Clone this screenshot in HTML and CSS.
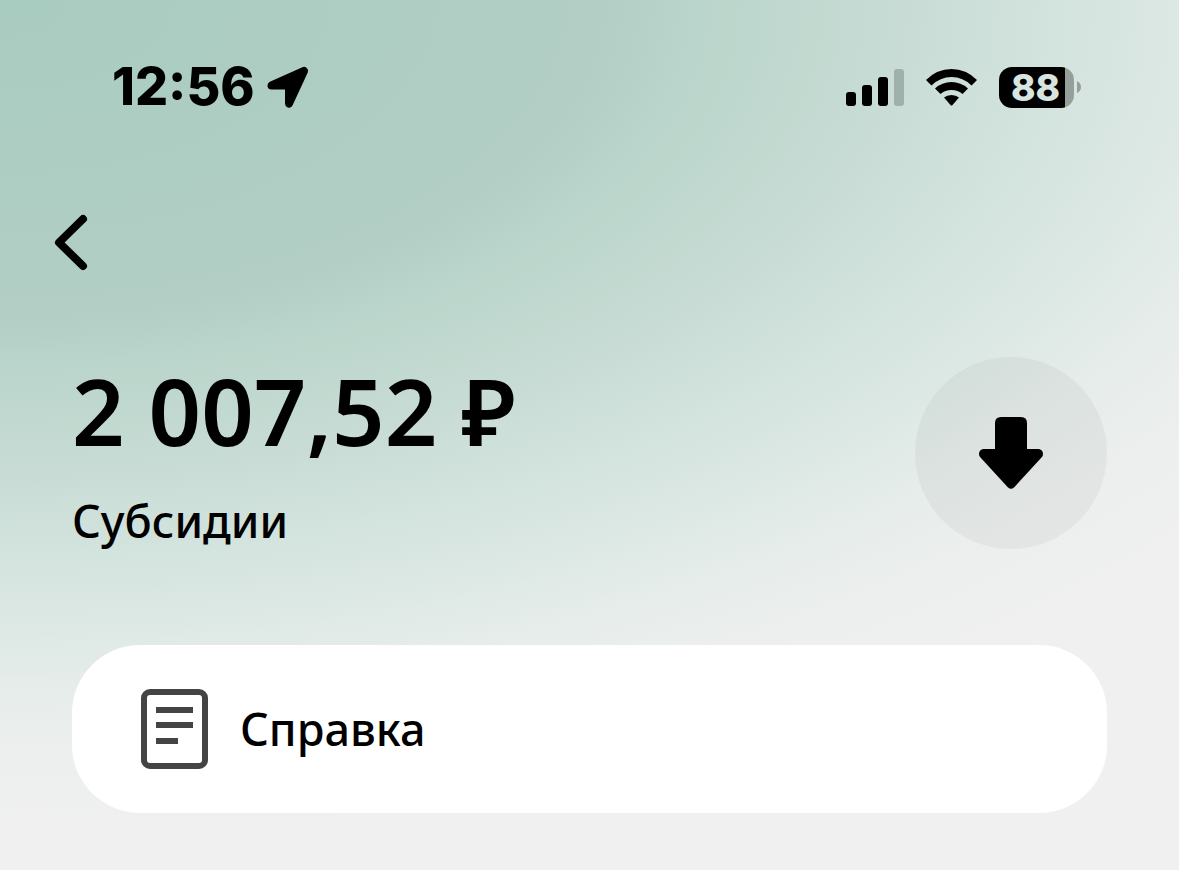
FILE: index.html
```html
<!DOCTYPE html>
<html lang="ru">
<head>
  <meta charset="UTF-8" />
  <meta name="viewport" content="width=device-width, initial-scale=1.0" />
  <title>Субсидии</title>
  <link rel="stylesheet" href="styles.css">
</head>
<body>

  <div class="status-bar">
    <div class="status-left">
      <span class="time">12:56</span>
      <svg class="location" width="42" height="42" viewBox="0 0 42 42">
        <path d="M4.500 19.500 37 5 22 37.500V19.500Z" />
      </svg>
    </div>
    <div class="status-right">
      <svg width="58" height="38" viewBox="0 0 58 38">
        <rect x="0" y="24" width="10" height="14" rx="3" />
        <rect x="16" y="17" width="10" height="21" rx="3" />
        <rect x="32" y="9" width="10" height="29" rx="3" />
        <rect class="faded" x="48" y="1" width="10" height="37" rx="3" />
      </svg>
      <svg width="51" height="38" viewBox="0 0 51 38">
        <path d="M0 12Q11 1 25.500 1T51 12L45.500 17.500Q37 9 25.500 9T5.500 17.500Z" />
        <path d="M9 20.500Q16 14 25.500 14T42 20.500L36.500 26Q32 22 25.500 22T14.500 26Z" />
        <path d="M18 29.500Q21 27 25.500 27T33 29.500L26.500 37Q25.500 38 24.500 37Z" />
      </svg>
      <div class="battery">
        <span class="battery-level">88</span>
        <svg class="battery-tip" width="4" height="12" viewBox="0 0 4 12">
          <path d="M0 0Q4 2 4 6T0 12Z" />
        </svg>
      </div>
    </div>
  </div>

  <div class="navbar">
    <button class="back" type="button" aria-label="Назад">
      <svg width="34" height="58" viewBox="0 0 34 58">
        <path d="M29 5 5 28.500 29 52" />
      </svg>
    </button>
  </div>

  <div class="container">
    <div class="account">
      <div>
        <h1 class="amount">2 007,52 ₽</h1>
        <p class="account-name">Субсидии</p>
      </div>
      <button class="download" type="button" aria-label="Пополнить">
        <svg width="64" height="72" viewBox="0 0 64 72">
          <path d="M22 0H42Q48 0 48 6V32H60Q64 33 64 37Q64 39 62.500 40.500L35 70.500Q32 73 29 70.500L1.500 40.500Q0 39 0 37Q0 33 4 32H16V6Q16 0 22 0Z" />
        </svg>
      </button>
    </div>

    <a class="card" href="#">
      <svg width="68" height="80" viewBox="0 0 68 80">
        <rect class="sheet" x="4" y="3" width="61" height="74" rx="6" />
        <path d="M16 18H53V24H16ZM16 33H53V39H16ZM16 49H38V55H16Z" />
      </svg>
      <span>Справка</span>
    </a>
  </div>

</body>
</html>
```

FILE: styles.css
```css
* {
  box-sizing: border-box;
  margin: 0;
  padding: 0;
}
body {
  min-height: 100vh;
  font-family: "Noto Sans", sans-serif;
  color: #000;
  background: #f0f0f0 radial-gradient(ellipse 118% 84% at 0 0, #a9ccc0 0%, #adcdc2 20%, #b2cec5 43%, #bad5cb 50%, #c6dbd3 63%, #d1e2dc 74%, #dce8e4 85%, #e7edeb 95%, #edefee 104%, #f0f0f0 118%) no-repeat;
}
button {
  border: none;
  background: none;
  cursor: pointer;
}
svg {
  display: block;
  flex-shrink: 0;
}
.status-bar {
  display: flex;
  justify-content: space-between;
  align-items: center;
  height: 111px;
  padding: 63px 98px 0 112px;
  font-family: Inter, sans-serif;
}
.status-left {
  display: flex;
  align-items: center;
  gap: 12px;
}
.time {
  font-size: 52px;
  line-height: 50px;
  font-weight: 800;
}
.location {
  stroke: #000;
  stroke-width: 8;
  stroke-linejoin: round;
}
.status-right {
  display: flex;
  align-items: center;
  gap: 22px;
}
.faded {
  fill-opacity: 0.2;
}
.battery {
  display: flex;
  align-items: center;
  gap: 3px;
}
.battery-level {
  width: 75px;
  height: 41px;
  padding-right: 2px;
  border-radius: 13px;
  background: linear-gradient(to right, #000 66px, rgba(0, 0, 0, 0.3) 66px);
  color: #d8e4df;
  font-size: 37px;
  line-height: 41px;
  font-weight: 800;
  text-align: center;
}
.battery-tip {
  fill-opacity: 0.3;
}
.navbar {
  padding: 103px 54px 0;
}
.back {
  display: block;
}
.back path {
  fill: none;
  stroke: #000;
  stroke-width: 8;
  stroke-linecap: round;
  stroke-linejoin: round;
}
.container {
  padding: 85px 72px 56px;
}
.account {
  display: flex;
  justify-content: space-between;
  align-items: center;
}
.amount {
  font-size: 92px;
  line-height: 108px;
  font-weight: 600;
}
.account-name {
  margin-top: 28px;
  font-size: 45px;
  line-height: 56px;
  font-weight: 500;
}
.download {
  display: flex;
  align-items: center;
  justify-content: center;
  flex-shrink: 0;
  width: 192px;
  height: 192px;
  border-radius: 50%;
  background: rgba(0, 0, 0, 0.04);
}
.card {
  display: flex;
  align-items: center;
  gap: 32px;
  min-height: 168px;
  margin-top: 96px;
  padding: 0 68px;
  border-radius: 68px;
  background: #fff;
  color: #000;
  font-size: 45px;
  line-height: 56px;
  font-weight: 500;
  text-decoration: none;
}
.card svg {
  fill: #444;
}
.card .sheet {
  fill: none;
  stroke: #444;
  stroke-width: 6;
}
```
